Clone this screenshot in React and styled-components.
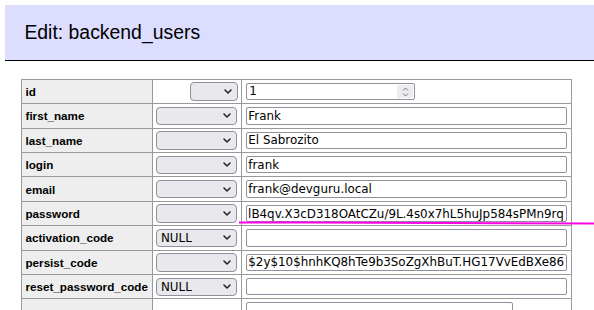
import React, { useEffect, useRef } from 'react';
import styled, { createGlobalStyle } from 'styled-components';

const GlobalStyle = createGlobalStyle`
  html, body {
    margin: 0;
    background: #fff;
    overflow: hidden;
  }
`;

const Page = styled.div`
  position: relative;
  width: 594px;
  height: 310px;
  overflow: hidden;
  padding: 5px 0 0 5px;
  box-sizing: border-box;
  font-family: "Liberation Sans", Arial, sans-serif;
  color: #000;
`;

const Title = styled.h2`
  margin: 0 0 18px 0;
  width: 640px;
  padding: 15.3px 19.4px;
  font-size: 19.4px;
  line-height: 24.3px;
  font-weight: normal;
  background: #ddf;
  border-bottom: 1px solid #000;
`;

const EditTable = styled.table`
  margin-left: 16px;
  width: 551px;
  border-collapse: collapse;
  table-layout: fixed;
  font-size: 11.66px;
`;

const Label = styled.th`
  background: #eee;
  border: 1px solid #999;
  padding: 2.5px 3.5px;
  text-align: left;
  vertical-align: middle;
  font-weight: bold;
  white-space: nowrap;
`;

const FuncCell = styled.td`
  border: 1px solid #999;
  padding: 2.5px 3.5px;
  text-align: ${p => (p.$right ? 'right' : 'left')};
  vertical-align: middle;
`;

const ValueCell = styled.td`
  border: 1px solid #999;
  padding: 2.5px 3.5px;
  vertical-align: ${p => (p.$top ? 'top' : 'middle')};
  line-height: 0;
`;

const SelectBox = styled.div`
  display: inline-flex;
  align-items: center;
  justify-content: space-between;
  box-sizing: border-box;
  width: ${p => p.$w}px;
  height: 18.4px;
  padding: 0 5px 0 4px;
  background: #e9e9ed;
  border: 1px solid #8f8f9d;
  border-radius: 4px;
  font: 11.85px "DejaVu Sans", sans-serif;
  color: #000;
  vertical-align: middle;
`;

const TextField = styled.input`
  box-sizing: border-box;
  width: 321.4px;
  height: 17.4px;
  margin: 0;
  padding: 0 1.5px;
  border: 1px solid #8f8f9d;
  border-radius: 2px;
  background: #fff;
  font: 11.9px "DejaVu Sans", sans-serif;
  color: #000;
  outline: none;
  vertical-align: middle;
`;

const NumberBox = styled.div`
  display: inline-flex;
  align-items: center;
  justify-content: space-between;
  box-sizing: border-box;
  width: 169.5px;
  height: 17.4px;
  padding: 1px 1px 1px 2.5px;
  border: 1px solid #8f8f9d;
  border-radius: 2px;
  font: 11.9px "DejaVu Sans", sans-serif;
  line-height: 1;
  vertical-align: middle;
`;

const Spinner = styled.span`
  display: flex;
  flex-direction: column;
  align-items: center;
  justify-content: center;
  gap: 2px;
  width: 16px;
  height: 100%;
  background: #ececee;
`;

const TextArea = styled.textarea`
  box-sizing: border-box;
  width: 267px;
  height: 90px;
  margin: 0;
  border: 1px solid #8f8f9d;
  border-radius: 2px;
  resize: none;
  font: 11.9px "DejaVu Sans", sans-serif;
`;

const Marker = styled.svg`
  position: absolute;
  left: 0;
  top: 0;
  pointer-events: none;
`;

const Chevron = () => (
  <svg width="8" height="5" viewBox="0 0 8 5">
    <path d="M1 1 L4 4 L7 1" fill="none" stroke="#222" strokeWidth="1.5" strokeLinecap="round" strokeLinejoin="round" />
  </svg>
);

const Select = ({ w = 80.8, children }) => (
  <SelectBox $w={w}>
    <span>{children}</span>
    <Chevron />
  </SelectBox>
);

const rows = [
  { name: 'first_name', value: 'Frank' },
  { name: 'last_name', value: 'El Sabrozito' },
  { name: 'login', value: 'frank' },
  { name: 'email', value: 'frank@devguru.local' },
  { name: 'password', value: '$2y$10$Qd7mVaXeNlB4qv.X3cD318OAtCZu/9L.4s0x7hL5huJp584sPMn9rq', scrollEnd: true },
  { name: 'activation_code', value: '', nullable: true },
  { name: 'persist_code', value: '$2y$10$hnhKQ8hTe9b3SoZgXhBuT.HG17VvEdBXe86' },
  { name: 'reset_password_code', value: '', nullable: true },
];

const Field = ({ value, scrollEnd }) => {
  const ref = useRef(null);
  useEffect(() => {
    if (scrollEnd && ref.current) ref.current.scrollLeft = ref.current.scrollWidth;
  }, [scrollEnd]);
  return <TextField ref={ref} defaultValue={value} readOnly />;
};

const App = () => (
  <Page>
    <GlobalStyle />
    <Title>Edit: backend_users</Title>
    <EditTable>
      <colgroup>
        <col style={{ width: '130.5px' }} />
        <col style={{ width: '89.8px' }} />
        <col />
      </colgroup>
      <tbody>
        <tr>
          <Label>id</Label>
          <FuncCell $right>
            <Select w={48} />
          </FuncCell>
          <ValueCell>
            <NumberBox>
              <span>1</span>
              <Spinner>
                <svg width="7" height="4" viewBox="0 0 7 4">
                  <path d="M1 3.5 L3.5 1 L6 3.5" fill="none" stroke="#777" strokeWidth="1" />
                </svg>
                <svg width="7" height="4" viewBox="0 0 7 4">
                  <path d="M1 0.5 L3.5 3 L6 0.5" fill="none" stroke="#777" strokeWidth="1" />
                </svg>
              </Spinner>
            </NumberBox>
          </ValueCell>
        </tr>
        {rows.map(r => (
          <tr key={r.name}>
            <Label>{r.name}</Label>
            <FuncCell>
              <Select>{r.nullable ? 'NULL' : ''}</Select>
            </FuncCell>
            <ValueCell>
              <Field value={r.value} scrollEnd={r.scrollEnd} />
            </ValueCell>
          </tr>
        ))}
        {/* next row (a textarea) runs off the bottom of the view */}
        <tr>
          <Label />
          <FuncCell />
          <ValueCell $top>
            <TextArea defaultValue="" readOnly />
          </ValueCell>
        </tr>
      </tbody>
    </EditTable>
    <Marker width="594" height="310">
      <path d="M239 222.4 L306 222.6 L594 223.4" fill="none" stroke="#ff00e6" strokeWidth="2" />
    </Marker>
  </Page>
);

export default App;
